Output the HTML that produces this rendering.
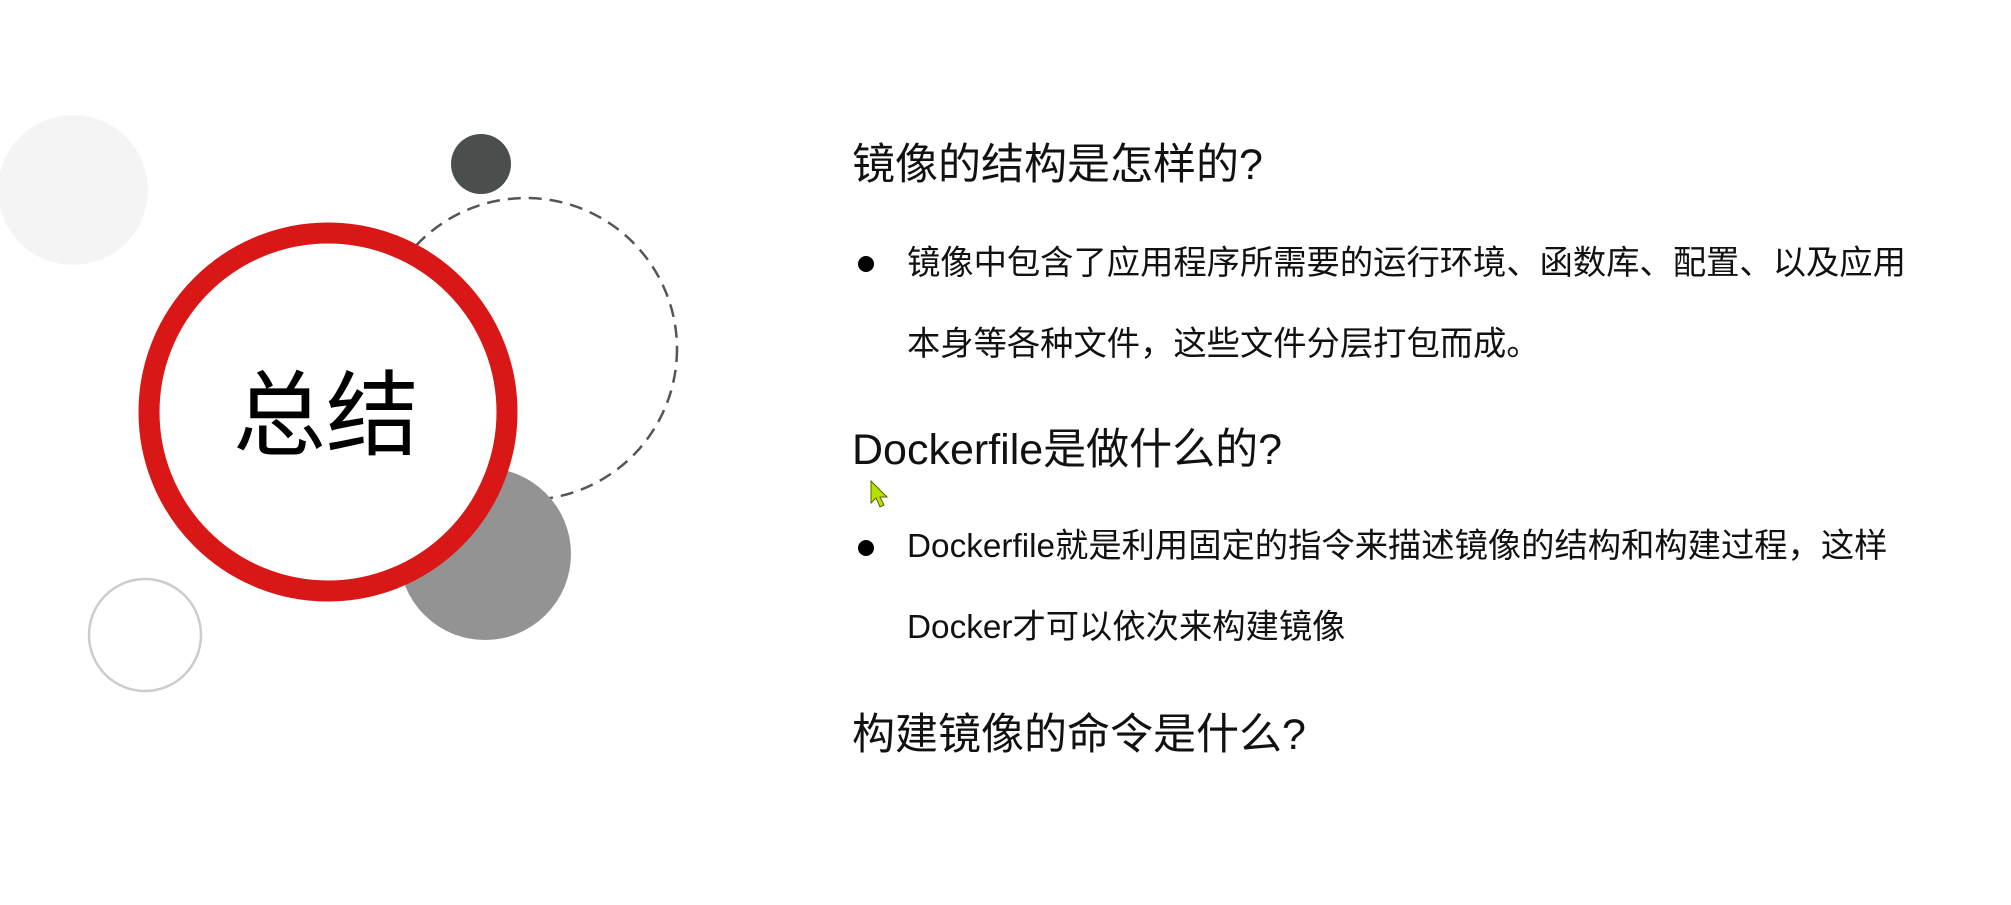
<!DOCTYPE html>
<html><head><meta charset="utf-8">
<style>
html,body{margin:0;padding:0;background:#fff;}
body{width:2011px;height:905px;position:relative;overflow:hidden;font-family:"Liberation Sans","Noto Sans CJK SC",sans-serif;color:#111;}
.t{position:absolute;white-space:nowrap;}
.h{font-size:43px;line-height:50px;}
.b{font-size:33.3px;line-height:42px;}
.dot{position:absolute;width:16px;height:16px;border-radius:50%;background:#000;}
</style></head><body>
<svg width="2011" height="905" style="position:absolute;left:0;top:0">
  <circle cx="73" cy="190" r="75" fill="#f4f4f4"/>
  <circle cx="481" cy="164" r="30" fill="#4a4f4e"/>
  <circle cx="526" cy="349" r="151" fill="none" stroke="#555" stroke-width="2.5" stroke-dasharray="13 8"/>
  <circle cx="485" cy="554" r="86" fill="#939393"/>
  <circle cx="145" cy="635" r="56" fill="none" stroke="#ccc" stroke-width="2.5"/>
  <circle cx="328" cy="412" r="179" fill="#fff" stroke="#d91716" stroke-width="21"/>
  <path d="M871 481 L871 503 L876 498 L880 507 L884 505 L880 497 L887 497 Z" fill="#b8e000" stroke="#556600" stroke-width="1"/>
</svg>
<div class="t" style="left:233px;top:361px;font-size:93px;line-height:110px;color:#000;">总结</div>
<div class="t h" style="left:852px;top:140px;">镜像的结构是怎样的?</div>
<div class="dot" style="left:858px;top:256px;"></div>
<div class="t b" style="left:907px;top:243px;">镜像中包含了应用程序所需要的运行环境、函数库、配置、以及应用</div>
<div class="t b" style="left:907px;top:324px;">本身等各种文件，这些文件分层打包而成。</div>
<div class="t h" style="left:852px;top:425px;">Dockerfile是做什么的?</div>
<div class="dot" style="left:858px;top:540px;"></div>
<div class="t b" style="left:907px;top:526px;">Dockerfile就是利用固定的指令来描述镜像的结构和构建过程，这样</div>
<div class="t b" style="left:907px;top:607px;">Docker才可以依次来构建镜像</div>
<div class="t h" style="left:852px;top:710px;">构建镜像的命令是什么?</div>
</body></html>
